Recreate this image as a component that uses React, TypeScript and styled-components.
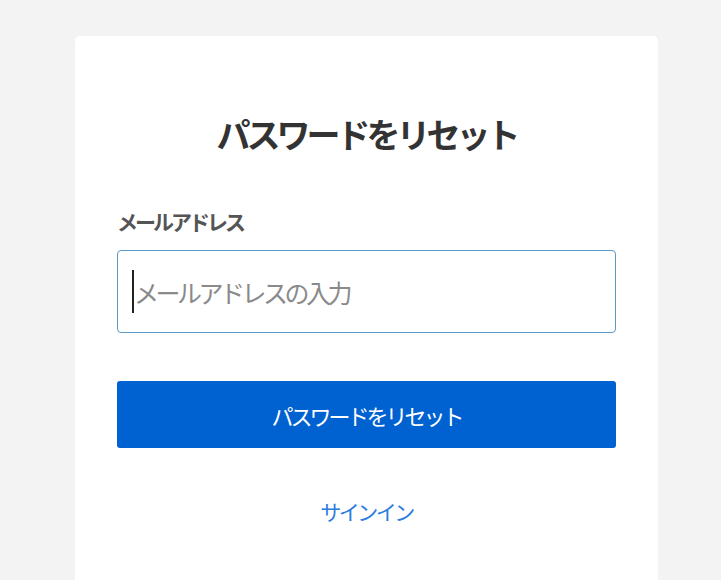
import React from "react";
import styled, { createGlobalStyle } from "styled-components";

const GlobalStyle = createGlobalStyle`
  html, body {
    margin: 0;
    padding: 0;
    background: #f3f3f3;
    font-family: "Noto Sans CJK JP", "Noto Sans", sans-serif;
  }
`;

const Page = styled.div`
  min-height: 580px;
  padding: 36px 0 0 75px;
  box-sizing: border-box;
  overflow: hidden;
`;

const Card = styled.div`
  width: 583px;
  min-height: 560px;
  background: #ffffff;
  border-radius: 5px;
  padding: 78px 42px 40px;
  box-sizing: border-box;
  display: flex;
  flex-direction: column;
`;

const Title = styled.h1`
  margin: 0 0 55px;
  font-size: 34px;
  letter-spacing: -4px;
  line-height: 40px;
  font-weight: 700;
  color: #333333;
  text-align: center;
`;

const Label = styled.label`
  display: block;
  font-size: 21px;
  letter-spacing: -3px;
  line-height: 24px;
  font-weight: 700;
  color: #555555;
  margin-bottom: 17px;
`;

const InputWrap = styled.div`
  position: relative;
  height: 83px;
  border: 1px solid #5b9bc9;
  border-radius: 4px;
  box-sizing: border-box;
  display: flex;
  align-items: center;
`;

const Input = styled.input`
  border: none;
  outline: none;
  background: transparent;
  width: 100%;
  height: 100%;
  padding: 0 0 0 16px;
  font-family: inherit;
  font-size: 25px;
  letter-spacing: -3.5px;
  color: #333;
  &::placeholder {
    color: #8a8a8a;
  }
`;

const Caret = styled.span`
  position: absolute;
  left: 14px;
  top: 19px;
  width: 2px;
  height: 43px;
  background: #222;
`;

const Button = styled.button`
  margin-top: 48px;
  height: 67px;
  border: none;
  border-radius: 3px;
  background: #0061d1;
  color: #ffffff;
  font-family: inherit;
  font-size: 22px;
  letter-spacing: -3px;
  cursor: pointer;
`;

const LinkRow = styled.div`
  margin-top: 50px;
  text-align: center;
  line-height: 26px;
`;

const SignIn = styled.a`
  color: #2b7be0;
  font-size: 21px;
  letter-spacing: -2.5px;
  text-decoration: none;
`;

export default function App() {
  return (
    <>
      <GlobalStyle />
      <Page>
        <Card>
          <Title>パスワードをリセット</Title>
          <Label htmlFor="email">メールアドレス</Label>
          <InputWrap>
            <Input id="email" type="email" placeholder="メールアドレスの入力" />
            <Caret />
          </InputWrap>
          <Button type="button">パスワードをリセット</Button>
          <LinkRow>
            <SignIn href="#">サインイン</SignIn>
          </LinkRow>
        </Card>
      </Page>
    </>
  );
}
